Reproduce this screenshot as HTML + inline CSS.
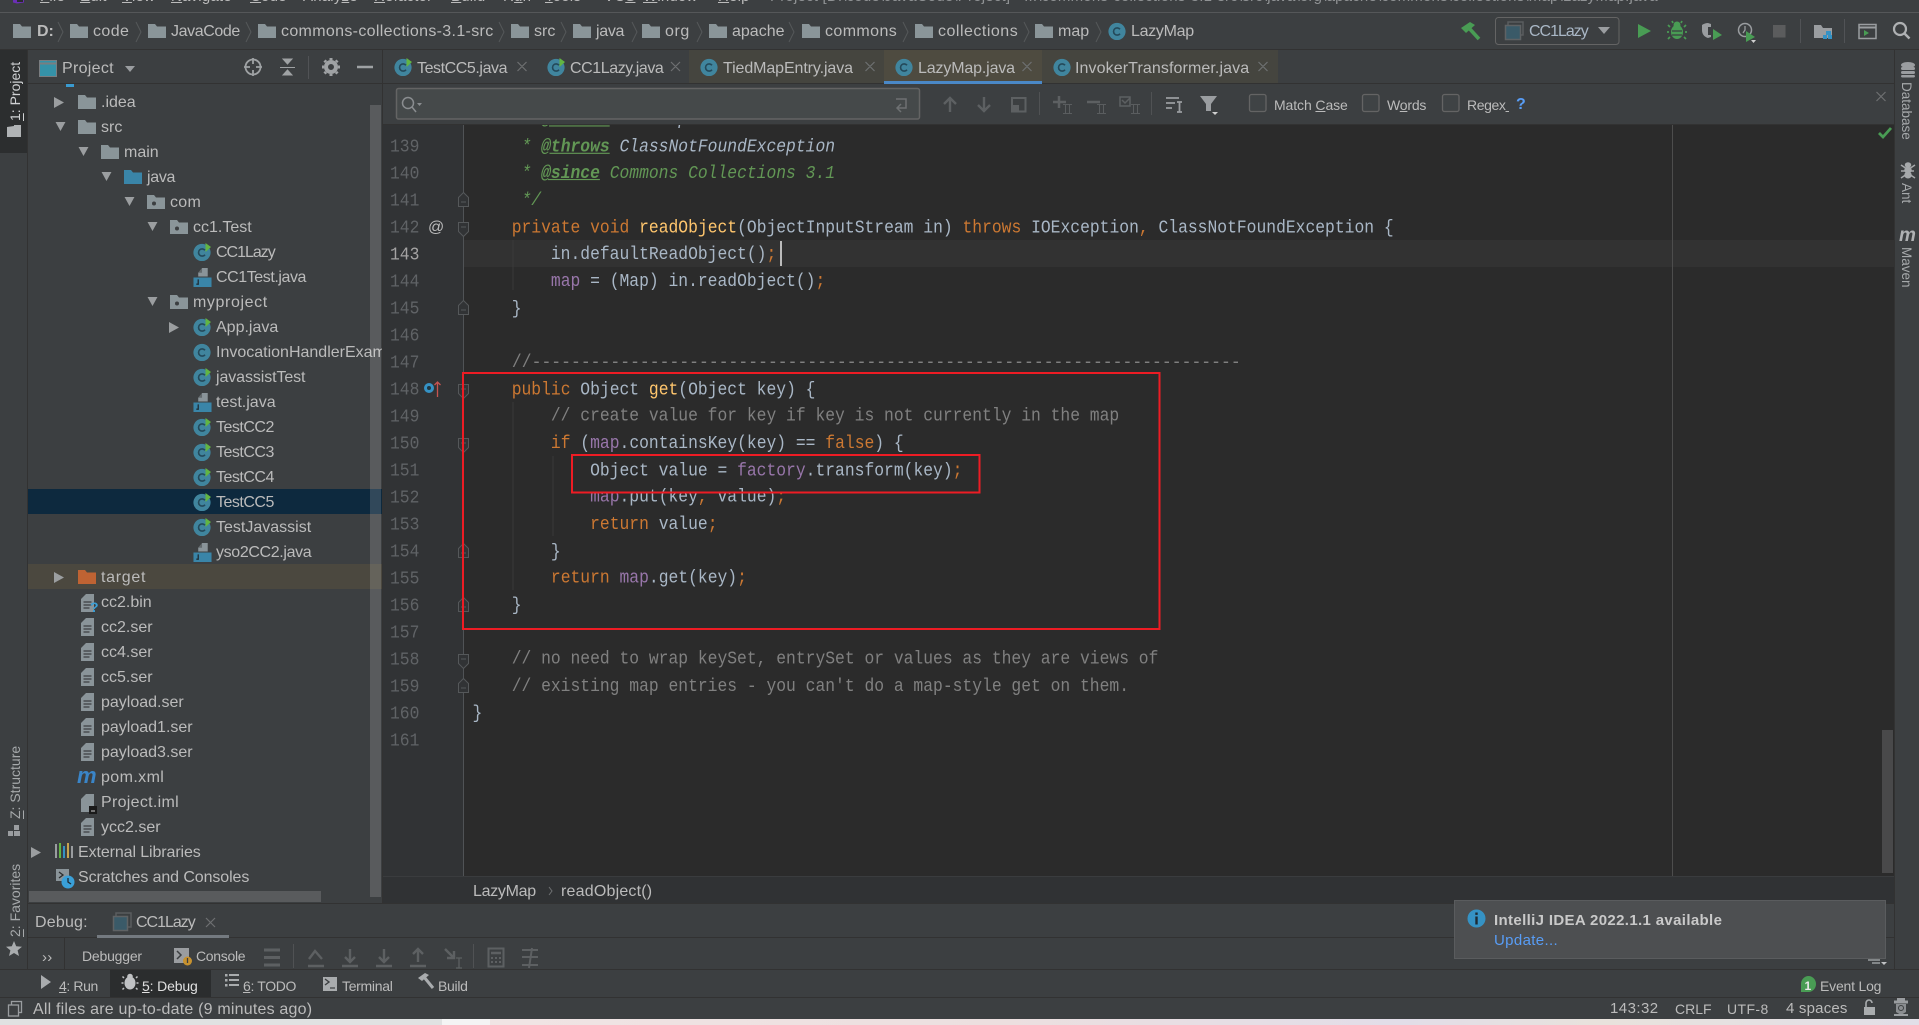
<!DOCTYPE html>
<html><head><meta charset="utf-8"><title>LazyMap.java</title>
<style>
html,body{margin:0;padding:0;background:#3c3f41;width:1919px;height:1025px;overflow:hidden}
*{box-sizing:border-box}
.a{position:absolute}
.t{position:absolute;white-space:nowrap;height:20px;font:16px/20px "Liberation Sans",sans-serif;letter-spacing:0;color:#bbbbbb}
.sm{font-size:15px;letter-spacing:.2px}
.xs{font-size:14px}
.v{position:absolute;writing-mode:vertical-rl;transform:rotate(180deg);white-space:nowrap;font:14px/18px "Liberation Sans",sans-serif;color:#a6a9ab}
.vr{position:absolute;writing-mode:vertical-rl;white-space:nowrap;font:13.5px/18px "Liberation Sans",sans-serif;color:#a6a9ab}
#code{position:absolute;left:9.5px;top:-19px;font:16.33px/23.684px "Liberation Mono",monospace;color:#a9b7c6;white-space:pre;transform:scaleY(1.14);transform-origin:0 0}
#code div{height:23.684px}
.k{color:#cc7832}.m{color:#ffc66d}.f{color:#9876aa}.g{color:#808080}.d{color:#629755;font-style:italic}.dt{color:#629755;font-style:italic;font-weight:bold;text-decoration:underline}.dc{color:#a9b7c6;font-style:italic}
.ln{position:absolute;left:390px;font:16.33px/27px "Liberation Mono",monospace;color:#606366;height:27px;transform:scaleY(1.14);margin-top:1px}
</style></head><body>

<!-- backgrounds -->
<div class="a" style="left:0;top:12px;width:1919px;height:1px;background:#555759"></div>
<div class="a" style="left:0;top:49px;width:1919px;height:1px;background:#323232"></div>
<div class="a" style="left:0;top:50px;width:27px;height:103px;background:#2c2e2f"></div>
<div class="a" style="left:27px;top:50px;width:1px;height:920px;background:#323232"></div>
<div class="a" style="left:28px;top:83px;width:354px;height:1px;background:#323232"></div>
<div class="a" style="left:382px;top:50px;width:1px;height:853px;background:#323232"></div>

<!-- editor -->
<div class="a" style="left:383px;top:83px;width:1511px;height:1px;background:#323232"></div>
<div class="a" style="left:383px;top:124px;width:1511px;height:1px;background:#323232"></div>
<div class="a" style="left:689px;top:50px;width:589px;height:33px;background:#45453f"></div>
<div class="a" style="left:884px;top:50px;width:158px;height:33px;background:#4e4b40"></div>
<div class="a" style="left:884px;top:81px;width:158px;height:3px;background:#4a88c7"></div>
<div class="a" style="left:383px;top:125px;width:80px;height:751px;background:#313335"></div>
<div class="a" style="left:463px;top:125px;width:1431px;height:751px;background:#2b2b2b"></div>
<div class="a" style="left:463px;top:240px;width:1431px;height:27px;background:#323232"></div>
<div class="a" style="left:1672px;top:125px;width:1px;height:751px;background:#4d4d4d"></div>
<div class="a" style="left:383px;top:876px;width:1511px;height:27px;background:#303234;border-top:1px solid #3a3c3e"></div>
<div class="a" style="left:1882px;top:730px;width:11px;height:143px;background:#49494a"></div>
<div class="a" style="left:1894px;top:50px;width:1px;height:920px;background:#323232"></div>

<div class="ln" style="top:132px">139</div><div class="ln" style="top:159px">140</div><div class="ln" style="top:186px">141</div><div class="ln" style="top:213px">142</div><div class="ln" style="top:240px;color:#a4a3a3">143</div><div class="ln" style="top:267px">144</div><div class="ln" style="top:294px">145</div><div class="ln" style="top:321px">146</div><div class="ln" style="top:348px">147</div><div class="ln" style="top:375px">148</div><div class="ln" style="top:402px">149</div><div class="ln" style="top:429px">150</div><div class="ln" style="top:456px">151</div><div class="ln" style="top:483px">152</div><div class="ln" style="top:510px">153</div><div class="ln" style="top:537px">154</div><div class="ln" style="top:564px">155</div><div class="ln" style="top:591px">156</div><div class="ln" style="top:618px">157</div><div class="ln" style="top:645px">158</div><div class="ln" style="top:672px">159</div><div class="ln" style="top:699px">160</div><div class="ln" style="top:726px">161</div>

<div class="a" style="left:463px;top:125px;width:1205px;height:751px;overflow:hidden">
<div id="code"><div><span class="d">     * </span><span class="dt">@throws</span><span class="dc"> IOException</span></div><div><span class="d">     * </span><span class="dt">@throws</span><span class="dc"> ClassNotFoundException</span></div><div><span class="d">     * </span><span class="dt">@since</span><span class="d"> Commons Collections 3.1</span></div><div><span class="d">     */</span></div><div>    <span class="k">private void</span> <span class="m">readObject</span>(ObjectInputStream in) <span class="k">throws</span> IOException<span class="k">,</span> ClassNotFoundException {</div><div>        in.defaultReadObject()<span class="k">;</span></div><div>        <span class="f">map</span> = (Map) in.readObject()<span class="k">;</span></div><div>    }</div><div> </div><div class="g" style="letter-spacing:.05px">    //------------------------------------------------------------------------</div><div>    <span class="k">public</span> Object <span class="m">get</span>(Object key) {</div><div class="g">        // create value for key if key is not currently in the map</div><div>        <span class="k">if</span> (<span class="f">map</span>.containsKey(key) == <span class="k">false</span>) {</div><div>            Object value = <span class="f">factory</span>.transform(key)<span class="k">;</span></div><div>            <span class="f">map</span>.put(key<span class="k">,</span> value)<span class="k">;</span></div><div>            <span class="k">return</span> value<span class="k">;</span></div><div>        }</div><div>        <span class="k">return</span> <span class="f">map</span>.get(key)<span class="k">;</span></div><div>    }</div><div> </div><div class="g">    // no need to wrap keySet, entrySet or values as they are views of</div><div class="g">    // existing map entries - you can't do a map-style get on them.</div><div>}</div></div>
</div>
<div class="a" style="left:780px;top:241px;width:2px;height:25px;background:#bbb"></div>

<!-- project tree backgrounds -->
<div class="a" style="left:28px;top:489px;width:354px;height:25px;background:#0d293e"></div>
<div class="a" style="left:28px;top:564px;width:354px;height:25px;background:#4b483f"></div>

<!-- menu -->
<div class="a" style="left:0;top:0;width:1919px;height:12px;overflow:hidden">
<div class="t sm" style="left:40px;top:-13px;color:#bbb"><u>F</u>ile</div><div class="t sm" style="left:80px;top:-13px"><u>E</u>dit</div><div class="t sm" style="left:122px;top:-13px"><u>V</u>iew</div><div class="t sm" style="left:171px;top:-13px"><u>N</u>avigate</div><div class="t sm" style="left:250px;top:-13px"><u>C</u>ode</div><div class="t sm" style="left:303px;top:-13px">Analy<u>z</u>e</div><div class="t sm" style="left:374px;top:-13px"><u>R</u>efactor</div><div class="t sm" style="left:451px;top:-13px"><u>B</u>uild</div><div class="t sm" style="left:503px;top:-13px">R<u>u</u>n</div><div class="t sm" style="left:545px;top:-13px"><u>T</u>ools</div><div class="t sm" style="left:604px;top:-13px">VC<u>S</u></div><div class="t sm" style="left:643px;top:-13px"><u>W</u>indow</div><div class="t sm" style="left:718px;top:-13px"><u>H</u>elp</div><div class="t sm" style="left:770px;top:-13px;color:#909395">Project [D:\code\JavaCode\Project] - ...\commons-collections-3.1-src\src\java\org\apache\commons\collections\map\LazyMap.java</div>
</div>

<!-- navigation bar -->
<div class="t" style="left:37px;top:22px;font-weight:bold">D:</div>
<div class="t" style="left:93px;top:22px;letter-spacing:.4px">code</div>
<div class="t" style="left:171px;top:22px;letter-spacing:-.4px">JavaCode</div>
<div class="t" style="left:281px;top:22px;letter-spacing:.33px">commons-collections-3.1-src</div>
<div class="t" style="left:534px;top:22px">src</div>
<div class="t" style="left:596px;top:22px;letter-spacing:-.3px">java</div>
<div class="t" style="left:665px;top:22px;letter-spacing:.6px">org</div>
<div class="t" style="left:732px;top:22px">apache</div>
<div class="t" style="left:825px;top:22px;letter-spacing:.4px">commons</div>
<div class="t" style="left:938px;top:22px;letter-spacing:.5px">collections</div>
<div class="t" style="left:1058px;top:22px">map</div>
<div class="t" style="left:1131px;top:22px;letter-spacing:-.3px">LazyMap</div>
<div class="t" style="left:1529px;top:22px;color:#a9b7c6;letter-spacing:-1px">CC1Lazy</div>

<!-- project panel -->
<div class="t" style="left:62px;top:59px;letter-spacing:.3px">Project</div>

<!-- tabs -->
<div class="t" style="left:417px;top:59px;letter-spacing:-.42px">TestCC5.java</div>
<div class="t" style="left:570px;top:59px;letter-spacing:-.42px">CC1Lazy.java</div>
<div class="t" style="left:723px;top:59px;letter-spacing:-.1px">TiedMapEntry.java</div>
<div class="t" style="left:918px;top:59px;letter-spacing:-.15px">LazyMap.java</div>
<div class="t" style="left:1075px;top:59px;letter-spacing:.1px">InvokerTransformer.java</div>

<!-- find options -->
<div class="t xs" style="left:1274px;top:95px;letter-spacing:-.1px">Match <u>C</u>ase</div>
<div class="t xs" style="left:1387px;top:95px;letter-spacing:-.2px">W<u>o</u>rds</div>
<div class="t xs" style="left:1467px;top:95px;letter-spacing:-.4px">Re<u>g</u>ex<u>&nbsp;</u></div>
<div class="t" style="left:1516px;top:95px;color:#589df6;font-weight:bold">?</div>

<!-- tree text -->
<div class="a" style="left:0;top:85px;width:382px;height:819px;overflow:hidden">
<div class="t" style="left:101px;top:8px">.idea</div>
<div class="t" style="left:101px;top:33px">src</div>
<div class="t" style="left:124px;top:58px">main</div>
<div class="t" style="left:147px;top:83px;letter-spacing:-.3px">java</div>
<div class="t" style="left:170px;top:108px;letter-spacing:.3px">com</div>
<div class="t" style="left:193px;top:133px">cc1.Test</div>
<div class="t" style="left:216px;top:158px;letter-spacing:-1px">CC1Lazy</div>
<div class="t" style="left:216px;top:183px;letter-spacing:-.43px">CC1Test.java</div>
<div class="t" style="left:193px;top:208px;letter-spacing:.6px">myproject</div>
<div class="t" style="left:216px;top:233px">App.java</div>
<div class="t" style="left:216px;top:258px">InvocationHandlerExample</div>
<div class="t" style="left:216px;top:283px;letter-spacing:-.1px">javassistTest</div>
<div class="t" style="left:216px;top:308px">test.java</div>
<div class="t" style="left:216px;top:333px;letter-spacing:-.5px">TestCC2</div>
<div class="t" style="left:216px;top:358px;letter-spacing:-.5px">TestCC3</div>
<div class="t" style="left:216px;top:383px;letter-spacing:-.5px">TestCC4</div>
<div class="t" style="left:216px;top:408px;letter-spacing:-.5px">TestCC5</div>
<div class="t" style="left:216px;top:433px">TestJavassist</div>
<div class="t" style="left:216px;top:458px;letter-spacing:-.36px">yso2CC2.java</div>
<div class="t" style="left:101px;top:483px;letter-spacing:.7px">target</div>
<div class="t" style="left:101px;top:508px">cc2.bin</div>
<div class="t" style="left:101px;top:533px">cc2.ser</div>
<div class="t" style="left:101px;top:558px">cc4.ser</div>
<div class="t" style="left:101px;top:583px">cc5.ser</div>
<div class="t" style="left:101px;top:608px">payload.ser</div>
<div class="t" style="left:101px;top:633px">payload1.ser</div>
<div class="t" style="left:101px;top:658px">payload3.ser</div>
<div class="t" style="left:101px;top:683px;letter-spacing:.4px">pom.xml</div>
<div class="t" style="left:101px;top:708px;letter-spacing:.3px">Project.iml</div>
<div class="t" style="left:101px;top:733px">ycc2.ser</div>
<div class="t" style="left:78px;top:758px;letter-spacing:-.1px">External Libraries</div>
<div class="t" style="left:78px;top:783px;letter-spacing:-.1px">Scratches and Consoles</div>
</div>
<div class="a" style="left:370px;top:105px;width:11px;height:792px;background:rgba(255,255,255,.15)"></div>
<div class="a" style="left:29px;top:891px;width:292px;height:11px;background:rgba(255,255,255,.15)"></div>

<!-- editor breadcrumb -->
<div class="t" style="left:473px;top:882px;letter-spacing:-.3px">LazyMap</div>
<div class="t" style="left:561px;top:882px;letter-spacing:.2px">readObject()</div>

<!-- debug window -->
<div class="a" style="left:28px;top:903px;width:1866px;height:1px;background:#323232"></div>
<div class="a" style="left:28px;top:937px;width:1866px;height:1px;background:#323232"></div>
<div class="a" style="left:97px;top:935px;width:132px;height:3px;background:#747a80"></div>
<div class="a" style="left:64px;top:938px;width:1px;height:31px;background:#323232"></div>
<div class="a" style="left:0;top:969px;width:1919px;height:1px;background:#323232"></div>
<div class="a" style="left:0;top:997px;width:1919px;height:1px;background:#323232"></div>
<div class="t" style="left:35px;top:913px;letter-spacing:.2px">Debug:</div>
<div class="t" style="left:136px;top:913px;letter-spacing:-1px">CC1Lazy</div>
<div class="t sm" style="left:42px;top:948px">››</div>
<div class="t xs" style="left:82px;top:946px;letter-spacing:-.2px">Debugger</div>
<div class="t xs" style="left:196px;top:946px;letter-spacing:-.3px">Console</div>

<!-- bottom tool tabs -->
<div class="a" style="left:110px;top:970px;width:101px;height:27px;background:#2b2d2e"></div>
<div class="t xs" style="left:59px;top:976px;letter-spacing:-.4px"><u>4</u>: Run</div>
<div class="t xs" style="left:142px;top:976px;color:#e0e0e0;letter-spacing:-.15px"><u>5</u>: Debug</div>
<div class="t xs" style="left:243px;top:976px;letter-spacing:-.35px"><u>6</u>: TODO</div>
<div class="t xs" style="left:342px;top:976px;letter-spacing:-.3px">Terminal</div>
<div class="t xs" style="left:438px;top:976px;letter-spacing:-.3px">Build</div>
<div class="t xs" style="left:1820px;top:976px;letter-spacing:-.2px">Event Log</div>

<!-- status bar -->
<div class="t" style="left:33px;top:1000px;letter-spacing:.2px">All files are up-to-date (9 minutes ago)</div>
<div class="t sm" style="left:1610px;top:999px;letter-spacing:.45px">143:32</div>
<div class="t xs" style="left:1675px;top:999px">CRLF</div>
<div class="t xs" style="left:1727px;top:999px;letter-spacing:.4px">UTF-8</div>
<div class="t sm" style="left:1786px;top:999px">4 spaces</div>
<div class="a" style="left:0;top:1019px;width:1919px;height:6px;background:linear-gradient(90deg,#e0e2e2 0,#e0e2e2 442px,#f4f4f4 442px,#f4f4f4 490px,#f0e4e4 490px,#ecdfdf 1000px,#e2dde8 1400px,#e8e2dc 1600px,#e2dfe8 100%)"></div>

<!-- vertical tool labels -->
<div class="v" style="left:6px;top:61px;height:60px;color:#d0d2d4"><u>1</u>: Project</div>
<div class="v" style="left:6px;top:745px;height:74px"><u>Z</u>: Structure</div>
<div class="v" style="left:6px;top:867px;height:70px"><u>2</u>: Favorites</div>
<div class="vr" style="left:1897px;top:82px">Database</div>
<div class="vr" style="left:1897px;top:183px">Ant</div>
<div class="vr" style="left:1897px;top:247px">Maven</div>

<!-- all icons and annotation shapes -->
<svg class="a" style="left:0;top:0" width="1919" height="1025" viewBox="0 0 1919 1025" xmlns="http://www.w3.org/2000/svg">
<defs>
<symbol id="fo" viewBox="0 0 18 14"><path d="M0 0h7l2 2.5h9V14H0z"/></symbol>
<symbol id="pk" viewBox="0 0 18 14"><path d="M0 0h7l2 2.5h9V14H0z"/><circle cx="7" cy="8.5" r="2" fill="#3c3f41"/></symbol>
<symbol id="c" viewBox="0 0 18 18"><circle cx="9" cy="9.5" r="8.6" fill="#40859e"/><path d="M12 7.3A3.6 3.6 0 1 0 12 11.7" stroke="#24495a" stroke-width="1.6" fill="none"/></symbol>
<symbol id="cr" viewBox="0 0 18 18"><circle cx="9" cy="9.5" r="8.6" fill="#40859e"/><path d="M12 7.3A3.6 3.6 0 1 0 12 11.7" stroke="#24495a" stroke-width="1.6" fill="none"/><path d="M12.5 0l5.5 4-5.500 5z" fill="#62b543"/></symbol>
<symbol id="jf" viewBox="0 0 19 20"><path d="M5 9V5l4-5h6v9z" fill="#8a9499"/><path d="M5 5h4V0" fill="#3c3f41" opacity=".5"/><rect y="10" width="19" height="10" fill="#3a85a8"/><path d="M5 12v5H3" stroke="#1f2f38" stroke-width="1.4" fill="none"/></symbol>
<symbol id="sf" viewBox="0 0 13 18"><path d="M0 5l5-5h8v18H0z" fill="#8a9499"/><path d="M2.500 8h8M2.500 11h8M2.500 14h6" stroke="#3c3f41" stroke-width="1.3"/></symbol>
<symbol id="dn" viewBox="0 0 11 10"><path d="M0 0h11L5.500 10z"/></symbol>
<symbol id="rt" viewBox="0 0 10 11"><path d="M0 0l10 5.500L0 11z"/></symbol>
<symbol id="fs" viewBox="0 0 11 15"><path d="M.5.500h10v9l-5 5-5-5z" fill="#313335" stroke="#55585a"/><path d="M3 5h5" stroke="#55585a"/></symbol>
<symbol id="fe" viewBox="0 0 11 15"><path d="M.5 14.500h10v-9l-5-5-5 5z" fill="#313335" stroke="#55585a"/><path d="M3 10h5" stroke="#55585a"/></symbol>
<symbol id="ii" viewBox="0 0 9 10"><path d="M0 .5h9M0 9.500h9M2.500 0v10M6.500 0v10" stroke="#5a5d5f" fill="none"/></symbol>
</defs>

<!-- logo scrap -->
<path d="M13 0v2.500l4 1 7-1V0z" fill="#6b2fb5"/><path d="M17 0v2h6V0z" fill="#2b2d2e"/>

<!-- nav folders -->
<g fill="#8a9599">
<use href="#fo" x="13" y="24" width="18" height="14"/><use href="#fo" x="70" y="24" width="18" height="14"/><use href="#fo" x="148" y="24" width="18" height="14"/><use href="#fo" x="258" y="24" width="18" height="14"/><use href="#fo" x="511" y="24" width="18" height="14"/><use href="#fo" x="573" y="24" width="18" height="14"/><use href="#fo" x="642" y="24" width="18" height="14"/><use href="#fo" x="709" y="24" width="18" height="14"/><use href="#fo" x="802" y="24" width="18" height="14"/><use href="#fo" x="915" y="24" width="18" height="14"/><use href="#fo" x="1035" y="24" width="18" height="14"/>
</g>
<use href="#c" x="1108" y="22" width="18" height="18"/>
<g stroke="#55585a" fill="none">
<path d="M58 22l5 10-5 10M136 22l5 10-5 10M246 22l5 10-5 10M499 22l5 10-5 10M561 22l5 10-5 10M632 22l5 10-5 10M697 22l5 10-5 10M789 22l5 10-5 10M903 22l5 10-5 10M1024 22l5 10-5 10M1096 22l5 10-5 10"/>
</g>

<!-- top-right toolbar -->
<path d="M1468 27l11 12" stroke="#499c54" stroke-width="3.600"/><path d="M1461 28l9-6 5 3-9 8z" fill="#499c54"/>
<rect x="1495.500" y="17.500" width="123.500" height="27" rx="3" fill="none" stroke="#646464"/>
<path d="M1508 25v-3h15v13h-3" fill="none" stroke="#5a5d5f" stroke-width="1.500"/><rect x="1505.500" y="25.500" width="15" height="14" fill="#3a5a68" stroke="#5f6264" stroke-width="1.500"/>
<path d="M1598 27h12l-6 7z" fill="#9a9da0"/>
<path d="M1638 24l13 7-13 7z" fill="#499c54"/>
<g fill="#499c54"><ellipse cx="1677" cy="32" rx="6" ry="7"/><circle cx="1677" cy="25" r="3.500"/></g>
<path d="M1670 27l-2-2M1684 27l2-2M1669 32h-2M1685 32h2M1670 37l-2 2M1684 37l2 2M1673 23l-1-2M1681 23l1-2" stroke="#499c54" stroke-width="1.700"/><path d="M1672 31h10M1672 35h10" stroke="#3c3f41" stroke-width="1.200"/>
<path d="M1702 25q3-2 6-2l3 1v13l-3 1q-6-2-6-8z" fill="#9a9da0"/><path d="M1708 27h3v8h-3z" fill="#3c3f41"/><path d="M1713 29l9 6-9 5z" fill="#499c54"/>
<circle cx="1745" cy="30" r="6.500" fill="none" stroke="#9a9da0" stroke-width="1.500"/><path d="M1745 26v4l-2 3" stroke="#9a9da0" fill="none" stroke-width="1.300"/><path d="M1746 31l9 6-9 5z" fill="#499c54"/><path d="M1751 40h5l-2.500 3z" fill="#d0d0d0"/>
<rect x="1773" y="25" width="12.500" height="12.500" fill="#5b5c5d"/>
<path d="M1800.500 19v24M1844.500 19v24" stroke="#515356"/>
<path d="M1814 25h7l2 3h9v10h-18z" fill="#9a9da0"/><rect x="1826" y="31" width="5" height="4" fill="#3592c4"/><rect x="1823" y="35" width="4" height="4" fill="#3592c4"/><rect x="1828" y="35" width="4" height="4" fill="#3592c4"/>
<rect x="1859" y="24.500" width="17" height="14" fill="none" stroke="#9a9da0" stroke-width="1.500"/><path d="M1859 27.500h17" stroke="#9a9da0" stroke-width="2"/><path d="M1864 30l5 3-5 3z" fill="#499c54"/>
<circle cx="1900" cy="29" r="6" fill="none" stroke="#afb1b3" stroke-width="2.200"/><path d="M1904.500 33.500l5 5" stroke="#afb1b3" stroke-width="2.500"/>

<!-- project header -->
<rect x="39.500" y="60.500" width="17" height="16" fill="#3592a8" stroke="#7a7d80"/><path d="M40 63.500h16" stroke="#7a7d80" stroke-width="2"/>
<path d="M125 66h10l-5 6z" fill="#9a9da0"/>
<circle cx="253" cy="67" r="7.500" fill="none" stroke="#9fa2a4" stroke-width="1.800"/><circle cx="253" cy="67" r="2.500" fill="#3c3f41"/><path d="M253 58v6M253 70v6M244 67h6M256 67h6" stroke="#9fa2a4" stroke-width="1.800"/>
<path d="M280 67.500h15M283 59h9l-4.500 5zM283 75h9l-4.500-5z" stroke="#9fa2a4" fill="#9fa2a4" stroke-width="1"/>
<path d="M308.500 56v23" stroke="#515356"/>
<circle cx="331" cy="67" r="5" fill="none" stroke="#9fa2a4" stroke-width="4"/><path d="M331 60v-2M331 74v2M324 67h-2M338 67h2M326 62l-1.500-1.500M336 62l1.500-1.500M326 72l-1.500 1.500M336 72l1.500 1.500" stroke="#9fa2a4" stroke-width="3"/>
<path d="M357 67h16" stroke="#9fa2a4" stroke-width="2.500"/>

<!-- left strip icons -->
<path d="M7 137v-10l7-1v-1h7v12z" fill="#b0b3b5"/>
<g fill="#9a9da0"><rect x="14" y="825" width="5" height="5"/><rect x="8" y="831" width="5" height="5"/><rect x="14" y="831" width="6" height="5"/></g>
<path d="M14 941l2.200 5.300 5.800.4-4.400 3.700 1.400 5.600-5-3-5 3 1.400-5.600L6 946.700l5.800-.4z" fill="#a9acae"/>

<!-- right strip icons -->
<g fill="#9a9da0"><ellipse cx="1908" cy="65" rx="7" ry="3"/><rect x="1901" y="67" width="14" height="3" rx="1.500"/><rect x="1901" y="71" width="14" height="3" rx="1.500"/><rect x="1901" y="75" width="14" height="2.500" rx="1.200"/></g>
<g stroke="#a6a9ab" stroke-width="1.500" fill="#a6a9ab"><ellipse cx="1908" cy="165" rx="2.500" ry="2"/><ellipse cx="1908" cy="170" rx="3" ry="2.500"/><ellipse cx="1908" cy="175" rx="3" ry="2.800"/><path d="M1901 165l6 4M1915 165l-6 4M1901 171h13M1901 178l6-4M1915 178l-6-4" fill="none"/></g>
<text x="1899" y="241" font-family="Liberation Sans" font-size="19" font-weight="bold" font-style="italic" fill="#afb1b3">m</text>

<!-- tab icons -->
<use href="#cr" x="394" y="58" width="18" height="18"/><use href="#cr" x="547" y="58" width="18" height="18"/>
<use href="#c" x="700" y="58" width="18" height="18"/><use href="#c" x="895" y="58" width="18" height="18"/><use href="#c" x="1053" y="58" width="18" height="18"/>
<path d="M517.500 62l9 9M526.500 62l-9 9M865.500 62l9 9M874.500 62l-9 9M1022.500 62l9 9M1031.500 62l-9 9M1258.500 62l9 9M1267.500 62l-9 9M671 62l9 9M680 62l-9 9" stroke="#6e7072" stroke-width="1.200"/>

<!-- find bar -->
<rect x="396.500" y="88.500" width="523" height="30.500" rx="2" fill="#45494a" stroke="#646464" stroke-width="1.500"/>
<circle cx="408" cy="103" r="5.500" fill="none" stroke="#8a8d90" stroke-width="1.500"/><path d="M412 107l4 5" stroke="#8a8d90" stroke-width="1.500"/><path d="M417 103h5l-2.500 3z" fill="#8a8d90"/>
<path d="M896 99h10v9h-8M901 104l-4 4 4 4" fill="none" stroke="#6e7173" stroke-width="1.500"/>
<g stroke="#5d6062" stroke-width="2.400" fill="none"><path d="M950 112V98M944 104l6-6 6 6M984 97v14M978 105l6 6 6-6"/></g>
<rect x="1012" y="98" width="13.500" height="13.500" fill="none" stroke="#5d6062" stroke-width="2"/><rect x="1012" y="105" width="7" height="6.500" fill="#5d6062"/>
<path d="M1039.500 92v23M1151.500 92v23" stroke="#505254"/>
<path d="M1059 96v12M1053 102h13" stroke="#5d6062" stroke-width="2.500"/>
<path d="M1087 102h13" stroke="#5d6062" stroke-width="2.500"/>
<rect x="1120" y="97" width="10" height="9" fill="none" stroke="#5d6062" stroke-width="1.500"/><path d="M1122 100l3 3 5-5" fill="none" stroke="#5d6062" stroke-width="1.500"/>
<use href="#ii" x="1063" y="104" width="9" height="10"/><use href="#ii" x="1097" y="104" width="9" height="10"/><use href="#ii" x="1131" y="104" width="9" height="10"/>
<path d="M1166 98h13M1166 103h9M1166 108h6M1177 102h5M1177 112h5M1179.500 102v10" stroke="#9a9da0" stroke-width="1.800" fill="none"/>
<path d="M1200 96h17l-6 8v7h-5v-7z" fill="#9a9da0"/><path d="M1212 112h6l-3 3z" fill="#d0d0d0"/>
<rect x="1249.500" y="94.500" width="16.500" height="17" rx="2" fill="#3f4345" stroke="#646464" stroke-width="1.300"/>
<rect x="1362.500" y="94.500" width="16.500" height="17" rx="2" fill="#3f4345" stroke="#646464" stroke-width="1.300"/>
<rect x="1442.500" y="94.500" width="16.500" height="17" rx="2" fill="#3f4345" stroke="#646464" stroke-width="1.300"/>
<path d="M1876.500 92l9 9M1885.500 92l-9 9" stroke="#6e7072" stroke-width="1.200"/>
<path d="M1879 133l4 4 8-9" fill="none" stroke="#499c54" stroke-width="2.800"/>

<!-- gutter -->
<path d="M463.500 125v751" stroke="#505356"/>
<path d="M513 240v50M513 402v188M553 456v80" stroke="#3a3a3a"/>
<use href="#fe" x="458" y="192" width="11" height="15"/>
<use href="#fs" x="458" y="222" width="11" height="15"/>
<use href="#fe" x="458" y="300" width="11" height="15"/>
<use href="#fs" x="458" y="384" width="11" height="15"/>
<use href="#fs" x="458" y="438" width="11" height="15"/>
<use href="#fe" x="458" y="543" width="11" height="15"/>
<use href="#fe" x="458" y="597" width="11" height="15"/>
<use href="#fs" x="458" y="654" width="11" height="15"/>
<use href="#fe" x="458" y="678" width="11" height="15"/>
<text x="428" y="232" font-family="Liberation Sans" font-size="16" fill="#bbbbbb">@</text>
<circle cx="429" cy="388" r="5" fill="#3592c4"/><circle cx="429" cy="388" r="2" fill="#1f3742"/>
<path d="M437.500 397v-15M434.500 385l3-3 3 3" fill="none" stroke="#c75450" stroke-width="1.300"/>

<!-- tree arrows -->
<g fill="#9b9ea0">
<use href="#rt" x="54" y="97" width="10" height="11"/>
<use href="#dn" x="55" y="122" width="11" height="9"/>
<use href="#dn" x="78" y="147" width="11" height="9"/>
<use href="#dn" x="101" y="172" width="11" height="9"/>
<use href="#dn" x="124" y="197" width="11" height="9"/>
<use href="#dn" x="147" y="222" width="11" height="9"/>
<use href="#dn" x="147" y="297" width="11" height="9"/>
<use href="#rt" x="169" y="322" width="10" height="11"/>
<use href="#rt" x="54" y="572" width="10" height="11"/>
<use href="#rt" x="31" y="847" width="10" height="11"/>
</g>

<!-- tree icons -->
<rect x="66" y="84" width="8" height="3" fill="#3a9bd0"/>
<g fill="#8a9599">
<use href="#fo" x="78" y="95" width="18" height="14"/>
<use href="#fo" x="78" y="120" width="18" height="14"/>
<use href="#fo" x="101" y="145" width="18" height="14"/>
<use href="#pk" x="147" y="195" width="18" height="14"/>
<use href="#pk" x="170" y="220" width="18" height="14"/>
<use href="#pk" x="170" y="295" width="18" height="14"/>
</g>
<use href="#fo" x="124" y="170" width="18" height="14" fill="#3a85a8"/>
<use href="#fo" x="78" y="570" width="18" height="14" fill="#bf6333"/>
<use href="#cr" x="193" y="243" width="18" height="18"/>
<use href="#jf" x="193" y="268" width="19" height="19"/>
<use href="#cr" x="193" y="318" width="18" height="18"/>
<use href="#c" x="193" y="343" width="18" height="18"/>
<use href="#cr" x="193" y="368" width="18" height="18"/>
<use href="#jf" x="193" y="393" width="19" height="19"/>
<use href="#cr" x="193" y="418" width="18" height="18"/>
<use href="#cr" x="193" y="443" width="18" height="18"/>
<use href="#cr" x="193" y="468" width="18" height="18"/>
<use href="#cr" x="193" y="493" width="18" height="18"/>
<use href="#cr" x="193" y="518" width="18" height="18"/>
<use href="#jf" x="193" y="543" width="19" height="19"/>
<use href="#sf" x="81" y="594" width="13" height="18"/>
<text x="90" y="612" font-family="Liberation Sans" font-size="14" font-weight="bold" fill="#3aa0d8">?</text>
<use href="#sf" x="81" y="618" width="13" height="18"/>
<use href="#sf" x="81" y="643" width="13" height="18"/>
<use href="#sf" x="81" y="668" width="13" height="18"/>
<use href="#sf" x="81" y="693" width="13" height="18"/>
<use href="#sf" x="81" y="718" width="13" height="18"/>
<use href="#sf" x="81" y="743" width="13" height="18"/>
<text x="77" y="783" font-family="Liberation Sans" font-size="22" font-weight="bold" font-style="italic" fill="#3a85c8">m</text>
<path d="M81 799l5-5h8v18H81z" fill="#8a9499"/><rect x="89" y="806" width="8" height="8" fill="#1a1a1a"/><path d="M91 811h4" stroke="#ccc"/>
<use href="#sf" x="81" y="818" width="13" height="18"/>
<g stroke-width="2"><path d="M56 844v14" stroke="#9a9da0"/><path d="M60 843v15" stroke="#62b543"/><path d="M64 846v12" stroke="#3592c4"/><path d="M68 843v15" stroke="#c7a450"/><path d="M72 846v12" stroke="#9a9da0"/></g>
<path d="M56 869h13v12H56z" fill="#8a9499"/><path d="M59 872l4 3-4 3" fill="none" stroke="#2b2d2e" stroke-width="1.300"/><circle cx="68" cy="882" r="6.500" fill="#3aa0d8"/><path d="M68 878v4l3 2" fill="none" stroke="#1d2a33" stroke-width="1.300"/>

<!-- breadcrumb chevron -->
<path d="M549 887l3 4-3 4" fill="none" stroke="#6e7072"/>

<!-- debug header icons -->
<path d="M116 916v-3h15v14h-3" fill="none" stroke="#5a5d5f" stroke-width="1.500"/><rect x="113.500" y="916.500" width="14" height="14" fill="#3a5a68" stroke="#5f6264" stroke-width="1.500"/>
<path d="M206 918l9 9M215 918l-9 9" stroke="#6e7072" stroke-width="1.200"/>

<!-- debug toolbar icons -->
<rect x="174" y="948" width="15" height="15" fill="#9a9da0"/><path d="M177 951l4 4-4 4" fill="none" stroke="#3c3f41" stroke-width="1.500"/><circle cx="187.500" cy="961" r="4.500" fill="#c7922f"/><path d="M187.500 958v5" stroke="#3c3f41" stroke-width="1.300"/>
<path d="M264 950h16M264 957.500h16M264 965h16" stroke="#5d6062" stroke-width="3"/>
<path d="M293.500 944v24M473.500 944v24" stroke="#505254"/>
<g stroke="#5d6062" stroke-width="2.400" fill="none">
<path d="M309 959l6-8 7 8M308 966h16"/>
<path d="M350 949v13M345 957l5 5 5-5M342 966h16"/>
<path d="M384 949v13M379 957l5 5 5-5M376 966h16"/>
<path d="M418 962v-13M413 954l5-5 5 5M410 966h16"/>
<path d="M445 949l9 9M454 951v7h-7"/>
</g>
<path d="M456 958h6M456 968h6M459 958v10" stroke="#5d6062" stroke-width="1.300"/>
<rect x="488.500" y="948.500" width="15" height="18" fill="none" stroke="#5d6062" stroke-width="2"/><path d="M491 953h10" stroke="#5d6062" stroke-width="2.500"/><path d="M491 958h2M495 958h2M499 958h2M491 962h2M495 962h2M499 962h2" stroke="#5d6062" stroke-width="2"/>
<path d="M522 950h16M522 957h16M522 965h16M532 948l-3 20" stroke="#5d6062" stroke-width="2" fill="none"/>

<!-- bottom tab icons -->
<path d="M41 975l10 7-10 7z" fill="#a9acae"/>
<ellipse cx="130" cy="983" rx="5.500" ry="6.500" fill="#c0c2c4"/><circle cx="130" cy="976.500" r="2.800" fill="#c0c2c4"/><path d="M124 978l-1.500-1.500M136 978l1.500-1.500M123.500 983h-2M136.500 983h2M124 988l-1.500 1.500M136 988l1.500 1.500" stroke="#c0c2c4" stroke-width="1.500"/>
<path d="M229 975h10M229 980h10M229 985h10" stroke="#a9acae" stroke-width="2"/><rect x="225" y="974" width="2.500" height="2.500" fill="#a9acae"/><rect x="225" y="979" width="2.500" height="2.500" fill="#a9acae"/><rect x="225" y="984" width="2.500" height="2.500" fill="#a9acae"/>
<rect x="323" y="977" width="14" height="14" fill="#a9acae"/><path d="M325 979l4 3-4 3" stroke="#3c3f41" stroke-width="1.400" fill="none"/><path d="M330 988h5" stroke="#3c3f41" stroke-width="1.200"/>
<path d="M424 977l9 11" stroke="#a9acae" stroke-width="3"/><path d="M418 978l7-5 4 2-7 6z" fill="#a9acae"/>
<path d="M1801 984a7.500 8 0 1 1 7.500 8h-7.500z" fill="#499c54"/><text x="1804.500" y="990" font-family="Liberation Sans" font-size="12" font-weight="bold" fill="#e8e8e8">1</text>

<!-- status icons -->
<rect x="11.500" y="1001.500" width="10" height="11" fill="none" stroke="#9a9da0" stroke-width="1.300"/><rect x="8.500" y="1005" width="10" height="11" fill="#3c3f41" stroke="#9a9da0" stroke-width="1.300"/>
<rect x="1864" y="1007" width="11" height="8" fill="#a9acae"/><path d="M1866 1007v-4a3 3 0 0 1 6 0" fill="none" stroke="#a9acae" stroke-width="1.600"/>
<path d="M1894 1002h14" stroke="#9a9da0" stroke-width="3"/><rect x="1897" y="998" width="8" height="4" fill="#9a9da0"/><path d="M1896 1004h10v8l-5 3-5-3z" fill="#8a8d90"/><path d="M1894 1015h14" stroke="#9a9da0" stroke-width="2"/><circle cx="1901" cy="1008" r="2.500" fill="none" stroke="#3c3f41"/>

<!-- red annotation boxes -->
<rect x="463" y="373" width="696.500" height="256" fill="none" stroke="#ed1c24" stroke-width="2"/>
<rect x="572" y="455" width="407.500" height="37.500" fill="none" stroke="#ed1c24" stroke-width="2"/>

<!-- restore icon under notification -->
<path d="M1868 960h12M1872 963h8" stroke="#9a9da0" stroke-width="1.500"/><path d="M1881 962h6l-3 3z" fill="#c0c2c4"/>
</svg>

<!-- notification -->
<div class="a" style="left:1454px;top:900px;width:432px;height:59px;background:#4d4f51;border:1px solid #5a5c5e"></div>
<svg class="a" style="left:1467px;top:909px" width="19" height="19" viewBox="0 0 19 19"><circle cx="9.500" cy="9.500" r="9" fill="#3592c4"/><rect x="8.300" y="3.500" width="2.400" height="2.400" fill="#1d2a33"/><rect x="8.300" y="7.500" width="2.400" height="8" fill="#1d2a33"/></svg>
<div class="t sm" style="left:1494px;top:911px;font-weight:bold;color:#c9c9c9;letter-spacing:.35px">IntelliJ IDEA 2022.1.1 available</div>
<div class="t sm" style="left:1494px;top:931px;color:#589df6;letter-spacing:.35px">Update...</div>

</body></html>
